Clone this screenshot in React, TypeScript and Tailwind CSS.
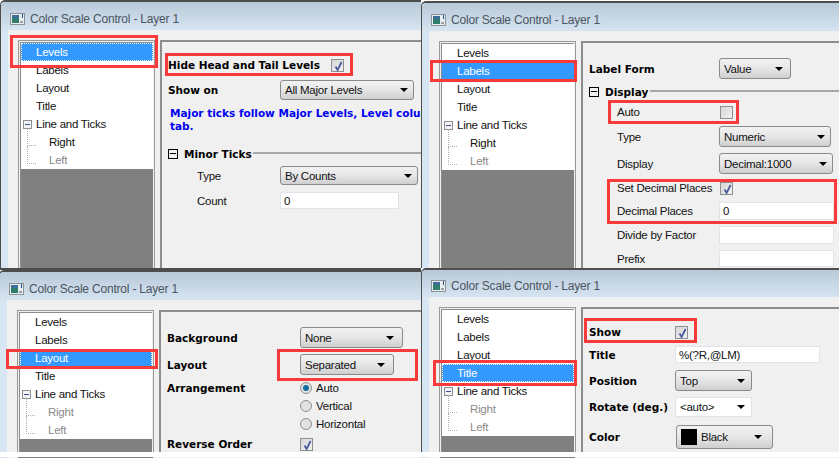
import React from "react";

const reg = "font-['Liberation_Sans',sans-serif] text-[11.5px] tracking-[-0.25px] leading-[14px] text-[#111]";
const bold = "font-['DejaVu_Sans',sans-serif] text-[10.5px] leading-[14px] font-bold text-black whitespace-nowrap";

function AppIcon() {
  return (
    <svg width="15" height="12" viewBox="0 0 15 12" className="shrink-0">
      <rect x="0.5" y="0.5" width="14" height="11" fill="#e8edf0" stroke="#8c9296" />
      <rect x="2" y="2" width="7" height="8" fill="#2f7d6b" />
      <rect x="2" y="2" width="7" height="3" fill="#3d6f9a" />
      <rect x="10" y="8" width="3" height="2" fill="#9aa0a4" />
      <rect x="12" y="1" width="1" height="4" fill="#1b4f8a" />
    </svg>
  );
}

function Check({ checked = true }: { checked?: boolean }) {
  return (
    <div className="w-[13px] h-[13px] border border-[#8e8f8f] bg-gradient-to-br from-[#d6d6d6] to-[#f1f1f1] p-px shrink-0">
      {checked && (
        <svg width="11" height="11" viewBox="0 0 11 11">
          <path d="M2.5 5.5 L4.6 9 L8.6 1" fill="none" stroke="#4a5a9e" strokeWidth="1.8" />
        </svg>
      )}
    </div>
  );
}

function Radio({ on = false }: { on?: boolean }) {
  return (
    <div className="w-[12px] h-[12px] rounded-full border border-[#8e8f8f] bg-[#e2e2e2] flex items-center justify-center shrink-0">
      {on && <div className="w-[6px] h-[6px] rounded-full bg-[#0f6f9f]" />}
    </div>
  );
}

function Arrow() {
  return (
    <svg width="8" height="4" viewBox="0 0 8 4" className="shrink-0">
      <path d="M0 0 H8 L4 4 Z" fill="#000" />
    </svg>
  );
}

function Drop({ w, label, white, swatch, pr = 5 }: { w: number; label: string; white?: boolean; swatch?: boolean; pr?: number }) {
  return (
    <div
      style={{ width: w, paddingRight: pr }}
      className={
        "h-full flex items-center justify-between pl-[4px] shrink-0 " +
        (white
          ? "bg-white border border-[#e3e3e3]"
          : "rounded-[3px] border border-[#8a8a8a] bg-gradient-to-b from-[#f2f2f2] via-[#e6e6e6] to-[#cfcfcf]")
      }
    >
      <div className="flex items-center gap-[4px]">
        {swatch && <div className="w-[16px] h-[16px] bg-black" />}
        <span className={reg}>{label}</span>
      </div>
      <Arrow />
    </div>
  );
}

function Input({ w, value = "" }: { w: number; value?: string }) {
  return (
    <div
      style={{ width: w }}
      className={"h-full bg-white border border-[#e2e3ea] pl-[3px] flex items-center shrink-0 " + reg}
    >
      {value}
    </div>
  );
}

function Row({
  mt,
  h,
  label,
  isBold,
  indent = 0,
  col,
  children,
}: {
  mt: number;
  h: number;
  label?: string;
  isBold?: boolean;
  indent?: number;
  col: number;
  children?: React.ReactNode;
}) {
  return (
    <div style={{ marginTop: mt, height: h, paddingLeft: indent }} className="flex items-center whitespace-nowrap">
      <div style={{ width: col - indent }} className={"shrink-0 " + (isBold ? bold : reg)}>
        {label}
      </div>
      {children}
    </div>
  );
}

function Group({ mt, label, lineAt }: { mt: number; label: string; lineAt: number }) {
  return (
    <div style={{ marginTop: mt }} className="h-[14px] flex items-center">
      <div className="w-[10px] h-[10px] border border-black relative shrink-0">
        <div className="absolute left-[1px] right-[1px] top-[3px] h-px bg-black" />
      </div>
      <span style={{ width: lineAt }} className={"ml-[6px] shrink-0 " + bold}>
        {label}
      </span>
      <div className="flex-1 h-[2px] -mt-[2px] bg-[#a8a8a8]" />
    </div>
  );
}

function TreeList({ selected, focus, rightActive }: { selected: string; focus?: boolean; rightActive?: boolean }) {
  const top = ["Levels", "Labels", "Layout", "Title"];
  return (
    <div className="w-[137px] border border-[#9a9a9a] p-px shrink-0 flex flex-col">
      <div className="flex-1 border-l border-t border-[#8c8c8c] bg-[#808080] flex flex-col">
        <div className="bg-white">
          {top.map((t) => (
            <div
              key={t}
              className={
                "h-[18px] pl-[15px] flex items-center " +
                reg +
                (t === selected ? " !text-white bg-[#3399ff]" : "") +
                (t === selected && focus ? " outline-1 -outline-offset-1 outline-dotted outline-white" : "")
              }
            >
              {t}
            </div>
          ))}
          <div className="h-[18px] pl-[2px] flex items-center">
            <div className="w-[9px] h-[9px] border border-[#8f8f8f] bg-[#f2f2f2] flex items-center justify-center shrink-0">
              <div className="w-[5px] h-px bg-[#3a4f9a]" />
            </div>
            <span className={"ml-[4px] " + reg}>Line and Ticks</span>
          </div>
          <div className={"h-[18px] pl-[6px] flex items-center " + reg}>
            <div className="w-[9px] h-[18px] -mt-[9px] border-l border-b border-dotted border-[#b0b0b0] -translate-y-px shrink-0" />
            <span className={"ml-[13px] " + (rightActive ? "" : "!text-[#8a8a8a]")}>Right</span>
          </div>
          <div className={"h-[18px] pl-[6px] flex items-center " + reg}>
            <div className="w-[9px] h-[18px] -mt-[9px] border-l border-b border-dotted border-[#b0b0b0] -translate-y-px shrink-0" />
            <span className="ml-[13px] !text-[#8a8a8a]">Left</span>
          </div>
        </div>
      </div>
    </div>
  );
}

function Win({
  h,
  titleH = 30,
  selected,
  focus,
  rightActive,
  className = "",
  children,
}: {
  h: number;
  titleH?: number;
  selected: string;
  focus?: boolean;
  rightActive?: boolean;
  className?: string;
  children?: React.ReactNode;
}) {
  return (
    <div
      style={{ height: h }}
      className={
        "flex flex-col overflow-hidden rounded-tl-[5px] border-t-2 border-l border-[#4d4d4d] bg-[#d8e5f2] shrink-0 " + className
      }
    >
      <div
        style={{ height: titleH - 2 }}
        className="shrink-0 flex items-center pl-[9px] pt-[5px] gap-[5px] bg-gradient-to-b from-[#b8c9d8] to-[#d6e4f2]"
      >
        <AppIcon />
        <span className="font-['Liberation_Sans',sans-serif] text-[12px] tracking-[-0.2px] text-[#4a5560]">
          Color Scale Control - Layer 1
        </span>
      </div>
      <div className="flex-1 min-h-0 ml-[7px] bg-[#f0f0f0] pl-[10px] flex gap-[5px]">
        <div className="mt-[10px] -mb-[4px] flex">
          <TreeList selected={selected} focus={focus} rightActive={rightActive} />
        </div>
        <div className="mt-[10px] -mb-[4px] flex-1 min-w-0 border-t-2 border-l-2 border-[#8d8d8d] pl-[6px] flex flex-col overflow-hidden">
          {children}
        </div>
      </div>
    </div>
  );
}

function Red({ x, y, w, h }: { x: number; y: number; w: number; h: number }) {
  return (
    <div
      style={{ left: x, top: y, width: w, height: h }}
      className="absolute border-[3px] border-[#f83a3a] pointer-events-none"
    />
  );
}

export default function App() {
  return (
    <div className="relative w-[839px] h-[458px] overflow-hidden bg-white flex flex-col">
      <div className="h-[452px] flex shrink-0">
        <div className="w-[421px] shrink-0 flex flex-col overflow-hidden">
          <Win h={270} selected="Levels" focus rightActive className="border-b-2 border-b-[#4d4d4d]">
            <Row mt={12} h={22} label="Hide Head and Tail Levels" isBold col={163}>
              <Check />
            </Row>
            <Row mt={4} h={20} label="Show on" isBold col={112}>
              <Drop w={134} label="All Major Levels" />
            </Row>
            <div className="mt-[7px] ml-[2px] whitespace-nowrap font-['DejaVu_Sans',sans-serif] text-[10.5px] leading-[13px] font-bold text-[#0000f0]">
              Major ticks follow Major Levels, Level colum
              <br />
              tab.
            </div>
            <Group mt={14} label="Minor Ticks" lineAt={69} />
            <Row mt={5} h={19} label="Type" indent={29} col={112}>
              <Drop w={138} label="By Counts" />
            </Row>
            <Row mt={7} h={17} label="Count" indent={29} col={112}>
              <Input w={119} value="0" />
            </Row>
          </Win>
          <Win h={182} selected="Layout" focus className="-ml-px">
            <Row mt={15} h={21} label="Background" isBold col={133}>
              <Drop w={103} label="None" pr={8} />
            </Row>
            <Row mt={6} h={21} label="Layout" isBold col={133}>
              <Drop w={94} label="Separated" pr={8} />
            </Row>
            <Row mt={6} h={14} label="Arrangement" isBold col={133}>
              <Radio on />
              <span className={"ml-[4px] " + reg}>Auto</span>
            </Row>
            <Row mt={4} h={14} col={133}>
              <Radio />
              <span className={"ml-[4px] " + reg}>Vertical</span>
            </Row>
            <Row mt={4} h={14} col={133}>
              <Radio />
              <span className={"ml-[4px] " + reg}>Horizontal</span>
            </Row>
            <Row mt={6} h={14} label="Reverse Order" isBold col={133}>
              <Check />
            </Row>
          </Win>
        </div>
        <div className="flex-1 min-w-0 flex flex-col overflow-hidden pt-px">
          <Win h={267} selected="Labels" rightActive>
            <Row mt={15} h={21} label="Label Form" isBold col={130}>
              <Drop w={72} label="Value" pr={7} />
            </Row>
            <Group mt={6} label="Display" lineAt={45} />
            <Row mt={6} h={14} label="Auto" indent={28} col={131}>
              <Check checked={false} />
            </Row>
            <Row mt={7} h={21} label="Type" indent={28} col={130}>
              <Drop w={112} label="Numeric" />
            </Row>
            <Row mt={6} h={21} label="Display" indent={28} col={130}>
              <Drop w={114} label="Decimal:1000" />
            </Row>
            <Row mt={7} h={14} label="Set Decimal Places" indent={28} col={131}>
              <Check />
            </Row>
            <Row mt={7} h={18} label="Decimal Places" indent={28} col={130}>
              <Input w={115} value="0" />
            </Row>
            <Row mt={6} h={18} label="Divide by Factor" indent={28} col={130}>
              <Input w={115} />
            </Row>
            <Row mt={6} h={17} label="Prefix" indent={28} col={130}>
              <Input w={115} />
            </Row>
          </Win>
          <Win h={184} titleH={29} selected="Title" focus>
            <Row mt={16} h={14} label="Show" isBold col={86}>
              <Check />
            </Row>
            <Row mt={7} h={17} label="Title" isBold col={86}>
              <Input w={145} value="%(?R,@LM)" />
            </Row>
            <Row mt={7} h={21} label="Position" isBold col={86}>
              <Drop w={77} label="Top" pr={6} />
            </Row>
            <Row mt={6} h={20} label="Rotate (deg.)" isBold col={86}>
              <Drop w={77} label="<auto>" white pr={6} />
            </Row>
            <Row mt={8} h={24} label="Color" isBold col={87}>
              <Drop w={97} label="Black" swatch pr={10} />
            </Row>
          </Win>
        </div>
      </div>
      <div className="h-[5px] bg-white shrink-0" />
      <div className="h-px flex shrink-0">
        <div className="w-[7px] bg-[#d8e5f2]" />
        <div className="w-[11px] bg-[#f0f0f0]" />
        <div className="w-[135px] bg-[#808080]" />
        <div className="w-[268px] bg-[#f0f0f0]" />
        <div className="w-[8px] bg-[#d8e5f2]" />
        <div className="w-[11px] bg-[#f0f0f0]" />
        <div className="w-[135px] bg-[#808080]" />
        <div className="flex-1 bg-[#f0f0f0]" />
      </div>
      <Red x={10} y={35} w={148} h={33} />
      <Red x={165} y={53} w={188} h={23} />
      <Red x={430} y={60} w={147} h={22} />
      <Red x={608} y={100} w={131} h={24} />
      <Red x={607} y={179} w={230} h={45} />
      <Red x={6} y={349} w={152} h={20} />
      <Red x={277} y={349} w={141} h={32} />
      <Red x={433} y={360} w={144} h={26} />
      <Red x={584} y={318} w={113} h={25} />
    </div>
  );
}
